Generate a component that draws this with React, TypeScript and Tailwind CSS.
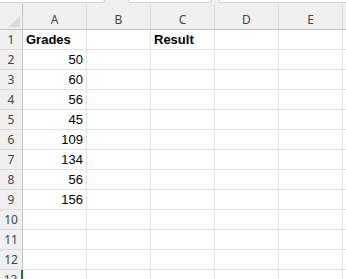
import React from "react";

const cols = ["A", "B", "C", "D", "E"];

const data: Record<number, { A?: string; C?: string; bold?: boolean }> = {
  1: { A: "Grades", C: "Result", bold: true },
  2: { A: "50" },
  3: { A: "60" },
  4: { A: "56" },
  5: { A: "45" },
  6: { A: "109" },
  7: { A: "134" },
  8: { A: "56" },
  9: { A: "156" },
};

const rows = Array.from({ length: 13 }, (_, i) => i + 1);

export default function App() {
  return (
    <div className="w-[346px] h-[279px] overflow-hidden bg-white">
      {/* formula bar edge */}
      <div className="flex h-[4px] bg-[#f0f0f0]">
        <div className="w-[105px] h-[3px] bg-white border-b border-r border-[#d4d4d4] rounded-br-[3px]" />
        <div className="w-[84px] h-[3px] ml-[23px] bg-white border-b border-x border-[#d4d4d4] rounded-b-[3px]" />
        <div className="flex-1 h-[3px] ml-[6px] bg-white border-b border-l border-[#d4d4d4] rounded-bl-[3px]" />
      </div>

      {/* column headers */}
      <div className="grid grid-cols-[23px_repeat(5,64px)_1fr] h-[26px] bg-[#f0f0f0] border-b border-[#c4c4c4] font-['Noto_Sans',sans-serif] text-[12px] leading-[16px] text-[#444]">
        <div className="flex items-end justify-end pr-[2px] pb-[2px] border-r border-[#c4c4c4]">
          <svg width="12" height="11" viewBox="0 0 12 11">
            <polygon points="12,0 12,11 0,11" fill="#dadada" />
          </svg>
        </div>
        {cols.map((c) => (
          <div key={c} className="flex items-end justify-center pb-[1px] border-r border-[#dcdcdc]">
            {c}
          </div>
        ))}
        <div />
      </div>

      {/* rows */}
      {rows.map((r) => {
        const row = data[r] || {};
        return (
          <div
            key={r}
            className="grid grid-cols-[23px_repeat(5,64px)_1fr] h-[20px] font-['Liberation_Sans',Arial,sans-serif] text-[13px] leading-[16px] text-black"
          >
            <div
              className={`flex items-center justify-center bg-[#f0f0f0] border-b border-[#dcdcdc] font-['Noto_Sans',sans-serif] text-[12px] text-[#444] ${
                r === 13 ? "border-r-2 border-r-[#217346]" : "border-r border-r-[#c4c4c4]"
              }`}
            >
              {r}
            </div>
            {cols.map((c) => {
              const v = (row as Record<string, string | undefined>)[c];
              const isNum = v !== undefined && /^\d+$/.test(v);
              return (
                <div
                  key={c}
                  className={`flex items-end pb-[1px] border-r border-b border-[#e1e1e1] ${
                    isNum ? "justify-end pr-[3px]" : "justify-start pl-[3px]"
                  } ${row.bold ? "font-bold" : ""}`}
                >
                  {v}
                </div>
              );
            })}
            <div className="border-b border-[#e1e1e1]" />
          </div>
        );
      })}
    </div>
  );
}
